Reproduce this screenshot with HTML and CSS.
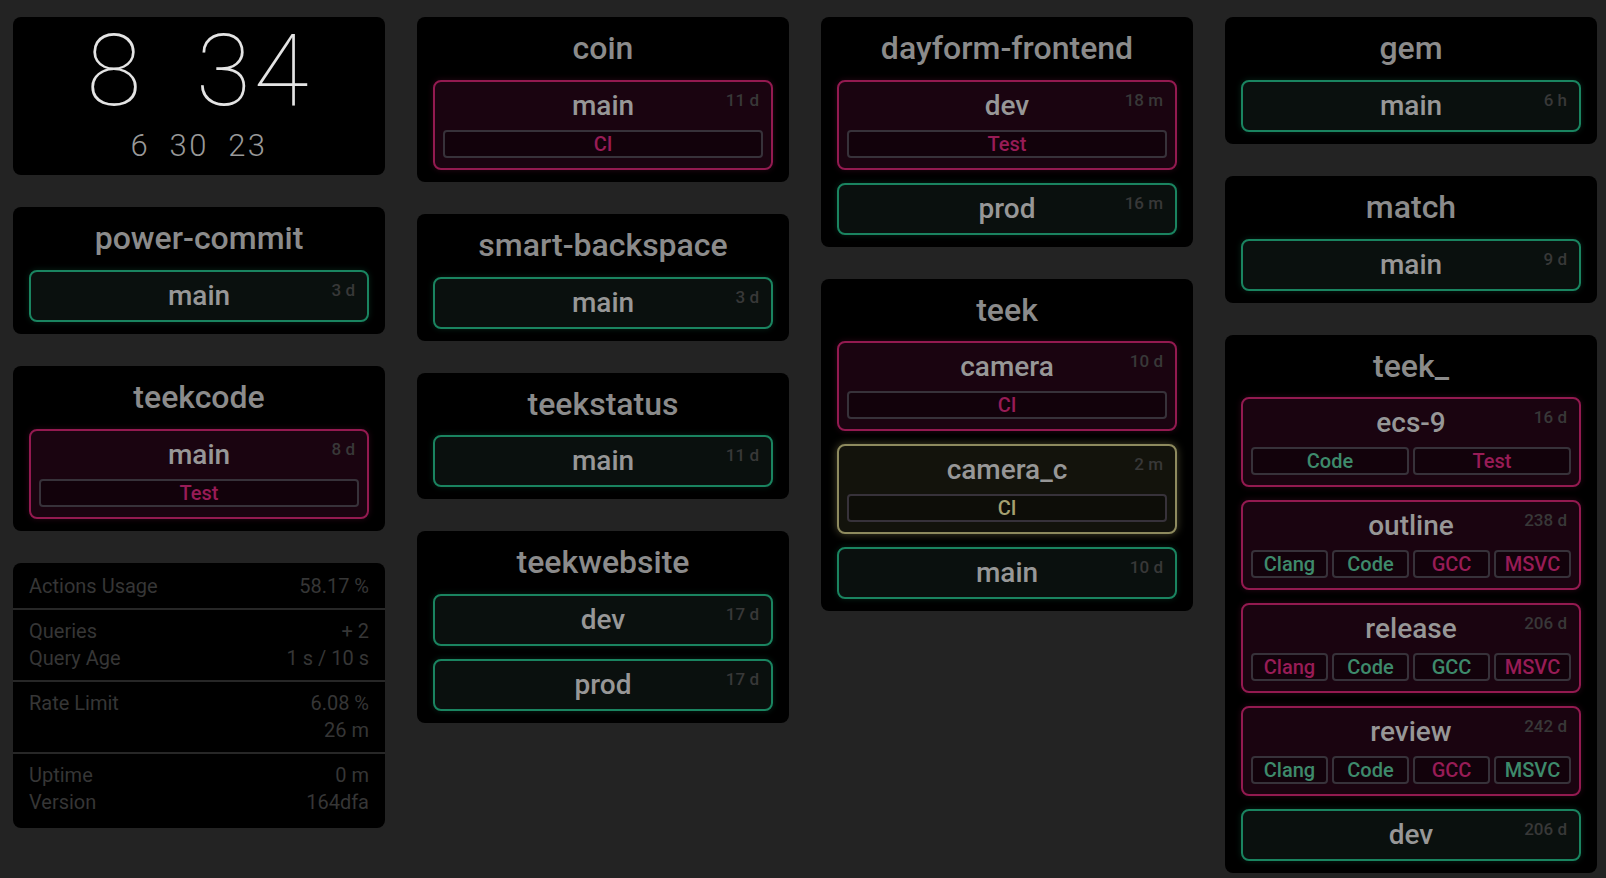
FILE: index.html
```html
<!DOCTYPE html>
<html lang="en">
<head>
<meta charset="utf-8">
<title>Status board</title>
<link rel="stylesheet" href="styles.css">
</head>
<body>
<main class="board">
  <section class="col">
    <div class="card clock">
      <div class="clock-main">8 34</div>
      <div class="clock-sub">6 30 23</div>
    </div>

    <div class="card">
      <div class="title">power-commit</div>
      <div class="branch ok"><div class="name">main</div><div class="age">3 d</div></div>
    </div>

    <div class="card">
      <div class="title">teekcode</div>
      <div class="branch fail checked"><div class="name">main</div><div class="age">8 d</div>
        <div class="checks"><div class="check c-fail">Test</div></div>
      </div>
    </div>

    <div class="stats">
      <div class="sec">
        <div class="row"><span>Actions Usage</span><span>58.17 %</span></div>
      </div>
      <div class="sec">
        <div class="row"><span>Queries</span><span>+ 2</span></div>
        <div class="row"><span>Query Age</span><span>1 s / 10 s</span></div>
      </div>
      <div class="sec">
        <div class="row"><span>Rate Limit</span><span>6.08 %</span></div>
        <div class="row"><span></span><span>26 m</span></div>
      </div>
      <div class="sec">
        <div class="row"><span>Uptime</span><span>0 m</span></div>
        <div class="row"><span>Version</span><span>164dfa</span></div>
      </div>
    </div>
  </section>

  <section class="col">
    <div class="card">
      <div class="title">coin</div>
      <div class="branch fail checked"><div class="name">main</div><div class="age">11 d</div>
        <div class="checks"><div class="check c-fail">CI</div></div>
      </div>
    </div>

    <div class="card">
      <div class="title">smart-backspace</div>
      <div class="branch ok"><div class="name">main</div><div class="age">3 d</div></div>
    </div>

    <div class="card">
      <div class="title">teekstatus</div>
      <div class="branch ok"><div class="name">main</div><div class="age">11 d</div></div>
    </div>

    <div class="card">
      <div class="title">teekwebsite</div>
      <div class="branch ok"><div class="name">dev</div><div class="age">17 d</div></div>
      <div class="branch ok"><div class="name">prod</div><div class="age">17 d</div></div>
    </div>
  </section>

  <section class="col">
    <div class="card">
      <div class="title">dayform-frontend</div>
      <div class="branch fail checked"><div class="name">dev</div><div class="age">18 m</div>
        <div class="checks"><div class="check c-fail">Test</div></div>
      </div>
      <div class="branch ok"><div class="name">prod</div><div class="age">16 m</div></div>
    </div>

    <div class="card">
      <div class="title">teek</div>
      <div class="branch fail checked"><div class="name">camera</div><div class="age">10 d</div>
        <div class="checks"><div class="check c-fail">CI</div></div>
      </div>
      <div class="branch pending checked"><div class="name">camera_c</div><div class="age">2 m</div>
        <div class="checks"><div class="check c-pend">CI</div></div>
      </div>
      <div class="branch ok"><div class="name">main</div><div class="age">10 d</div></div>
    </div>
  </section>

  <section class="col">
    <div class="card">
      <div class="title">gem</div>
      <div class="branch ok"><div class="name">main</div><div class="age">6 h</div></div>
    </div>

    <div class="card">
      <div class="title">match</div>
      <div class="branch ok"><div class="name">main</div><div class="age">9 d</div></div>
    </div>

    <div class="card">
      <div class="title">teek_</div>
      <div class="branch fail checked"><div class="name">ecs-9</div><div class="age">16 d</div>
        <div class="checks"><div class="check c-ok">Code</div><div class="check c-fail">Test</div></div>
      </div>
      <div class="branch fail checked"><div class="name">outline</div><div class="age">238 d</div>
        <div class="checks"><div class="check c-ok">Clang</div><div class="check c-ok">Code</div><div class="check c-fail">GCC</div><div class="check c-fail">MSVC</div></div>
      </div>
      <div class="branch fail checked"><div class="name">release</div><div class="age">206 d</div>
        <div class="checks"><div class="check c-fail">Clang</div><div class="check c-ok">Code</div><div class="check c-ok">GCC</div><div class="check c-fail">MSVC</div></div>
      </div>
      <div class="branch fail checked"><div class="name">review</div><div class="age">242 d</div>
        <div class="checks"><div class="check c-ok">Clang</div><div class="check c-ok">Code</div><div class="check c-fail">GCC</div><div class="check c-ok">MSVC</div></div>
      </div>
      <div class="branch ok"><div class="name">dev</div><div class="age">206 d</div></div>
    </div>
  </section>
</main>
</body>
</html>
```
FILE: styles.css
```css
html, body {
  margin: 0;
  background: #232323;
  font-family: Roboto, "Liberation Sans", Arial, sans-serif;
}

.board {
  display: grid;
  grid-template-columns: repeat(4, 372px);
  column-gap: 32px;
  align-items: start;
  padding: 17px 0 0 13px;
}

.col {
  display: flex;
  flex-direction: column;
  gap: 32px;
}

.card {
  background: #000;
  border-radius: 8px;
  padding: 12px 16px;
  display: flex;
  flex-direction: column;
  gap: 12.8px;
}

.title {
  font-size: 32px;
  font-weight: 500;
  line-height: 38px;
  color: #8b8b8b;
  text-align: center;
}

/* clock */
.clock {
  display: block;
  padding: 4px 0 14px;
  text-align: center;
}
.clock-main {
  height: 100px;
  font-size: 100px;
  font-weight: 100;
  line-height: 100px;
  color: #e4e4e4;
  letter-spacing: 3px;
  word-spacing: 25px;
  white-space: pre;
}
.clock-sub {
  margin-top: 10px;
  font-size: 31px;
  font-weight: 300;
  line-height: 30px;
  color: #999;
  letter-spacing: 2.4px;
  word-spacing: 9.5px;
  white-space: pre;
}

/* branches */
.branch {
  position: relative;
  border: 2px solid;
  border-radius: 8px;
  padding: 0 8px;
}
.branch.checked {
  padding-bottom: 10px;
}
.branch.ok {
  border-color: #1a8460;
  background: #0a100e;
  box-shadow: 0 0 6px rgba(27, 134, 96, 0.25);
}
.branch.fail {
  border-color: #931a50;
  background: #1a0410;
  box-shadow: 0 0 6px rgba(150, 27, 82, 0.25);
}
.branch.pending {
  border-color: #8e8a5e;
  background: #13130c;
  box-shadow: 0 0 9px rgba(160, 155, 100, 0.45);
}

.name {
  font-size: 28px;
  font-weight: 500;
  line-height: 48px;
  color: #979797;
  text-align: center;
}

.age {
  position: absolute;
  top: 9px;
  right: 12px;
  font-size: 17px;
  font-weight: 500;
  line-height: 19px;
  color: #383838;
}

.checks {
  display: flex;
  gap: 4px;
}
.check {
  flex: 1;
  height: 28px;
  box-sizing: border-box;
  border: 2px solid #37323a;
  border-radius: 4px;
  background: rgba(0, 0, 0, 0.28);
  font-size: 20px;
  font-weight: 500;
  line-height: 24px;
  text-align: center;
}
.c-ok { color: #3e8a6b; }
.c-fail { color: #981c56; }
.c-pend { color: #a5a070; }

/* stats */
.stats {
  background: #000;
  border-radius: 8px;
  padding: 2px 0 4px;
}
.sec {
  padding: 8px 16px;
}
.sec + .sec {
  border-top: 2px solid #272727;
}
.row {
  display: flex;
  justify-content: space-between;
  font-size: 20px;
  line-height: 27px;
  color: #363636;
}
```
